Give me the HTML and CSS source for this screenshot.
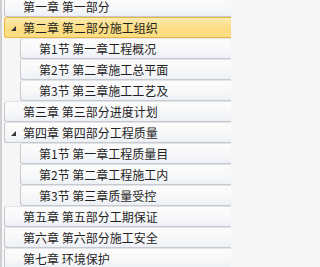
FILE: index.html
```html
<!DOCTYPE html>
<html lang="zh-CN">
<head>
<meta charset="utf-8">
<title>目录</title>
<link rel="stylesheet" href="styles.css">
</head>
<body>
<div class="panel">
  <ul class="tree">
    <li class="node chapter"><span class="twisty"></span><span class="label">第一章 第一部分</span></li>
    <li class="node chapter selected"><span class="twisty"><svg class="tri" width="5" height="5" viewBox="0 0 5 5"><polygon points="5,0 5,5 0,5"/></svg></span><span class="label">第二章 第二部分施工组织</span></li>
    <li class="node section"><span class="twisty"></span><span class="label">第1节 第一章工程概况</span></li>
    <li class="node section"><span class="twisty"></span><span class="label">第2节 第二章施工总平面</span></li>
    <li class="node section"><span class="twisty"></span><span class="label">第3节 第三章施工工艺及</span></li>
    <li class="node chapter"><span class="twisty"></span><span class="label">第三章 第三部分进度计划</span></li>
    <li class="node chapter"><span class="twisty"><svg class="tri" width="5" height="5" viewBox="0 0 5 5"><polygon points="5,0 5,5 0,5"/></svg></span><span class="label">第四章 第四部分工程质量</span></li>
    <li class="node section"><span class="twisty"></span><span class="label">第1节 第一章工程质量目</span></li>
    <li class="node section"><span class="twisty"></span><span class="label">第2节 第二章工程施工内</span></li>
    <li class="node section"><span class="twisty"></span><span class="label">第3节 第三章质量受控</span></li>
    <li class="node chapter"><span class="twisty"></span><span class="label">第五章 第五部分工期保证</span></li>
    <li class="node chapter"><span class="twisty"></span><span class="label">第六章 第六部分施工安全</span></li>
    <li class="node chapter"><span class="twisty"></span><span class="label">第七章 环境保护</span></li>
  </ul>
</div>
</body>
</html>
```
FILE: styles.css
```css
html, body {
  margin: 0;
  padding: 0;
}
body {
  width: 231px;
  height: 267px;
  background: #f6f6f7;
  font-family: "Noto Sans CJK SC", "Noto Sans", sans-serif;
  font-size: 12px;
  color: #1f1f1f;
  overflow: hidden;
}
.panel {
  border-left: 2px solid #cfd0d4;
  height: 267px;
  box-sizing: border-box;
  overflow: hidden;
}
.tree {
  list-style: none;
  margin: -4px 0 0 0;
  padding: 0;
}
.node {
  display: flex;
  align-items: center;
  height: 21px;
  box-sizing: border-box;
  border: 1px solid #c7c9cd;
  border-top-color: #e1e3e7;
  border-right: none;
  border-radius: 3px 0 0 3px;
  background: linear-gradient(to bottom, #fcfcfc 0%, #f8f8f9 55%, #ecf0f6 100%);
  white-space: nowrap;
  overflow: hidden;
}
.chapter {
  margin-left: 2px;
}
.section {
  margin-left: 18px;
}
.selected {
  border-color: #ebb847;
  background: linear-gradient(to bottom, #fdeab0 0%, #fce39a 25%, #fbdc80 60%, #fbdd84 100%);
}
.twisty {
  flex: none;
  width: 18px;
  box-sizing: border-box;
  padding-left: 6px;
  display: flex;
  align-items: center;
  height: 19px;
}
.tri {
  display: block;
  fill: #333333;
  margin-top: 1px;
}
.label {
  line-height: 19px;
}
```
